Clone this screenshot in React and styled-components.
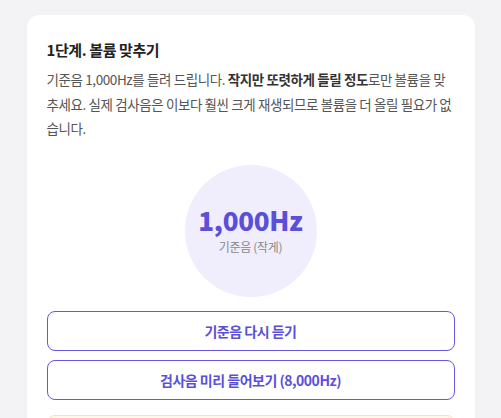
import React from 'react';
import styled, { createGlobalStyle } from 'styled-components';

const GlobalStyle = createGlobalStyle`
  body {
    margin: 0;
    background: #f3f3f6;
    font-family: "Noto Sans CJK KR", "Noto Sans", sans-serif;
  }
`;

const Card = styled.div`
  max-width: 448px;
  margin: 15px auto 0;
  background: #fff;
  border-radius: 12px;
  box-shadow: 0 1px 3px rgba(0, 0, 0, 0.04);
  padding: 24px 20px 20px;
  box-sizing: border-box;
`;

const Title = styled.h2`
  margin: 0 0 6px;
  font-size: 15px;
  line-height: 22px;
  font-weight: 700;
  color: #222;
  letter-spacing: -0.4px;
`;

const Desc = styled.p`
  margin: 0;
  font-size: 13.5px;
  line-height: 24.5px;
  color: #555;
  letter-spacing: -0.4px;

  strong {
    font-weight: 700;
    color: #333;
  }
`;

const Tone = styled.div`
  width: 132px;
  height: 132px;
  border-radius: 50%;
  background: #f0eefd;
  margin: 24px auto 14px;
  display: flex;
  flex-direction: column;
  align-items: center;
  justify-content: center;
`;

const Freq = styled.div`
  font-size: 26px;
  line-height: 30px;
  font-weight: 800;
  color: #5b4fd9;
  letter-spacing: -0.3px;
  margin-bottom: 3px;
`;

const ToneLabel = styled.div`
  font-size: 12px;
  line-height: 18px;
  color: #888;
  letter-spacing: -0.3px;
`;

const Actions = styled.div`
  display: flex;
  flex-direction: column;
  gap: 9px;
`;

const OutlineButton = styled.button`
  height: 40px;
  border: 1px solid #6656e0;
  border-radius: 8px;
  background: #fff;
  color: #5b4fd9;
  font-family: inherit;
  font-size: 14px;
  font-weight: 700;
  letter-spacing: -0.5px;
  cursor: pointer;
`;

const Notice = styled.div`
  margin-top: 15px;
  height: 40px;
  border: 1px solid #f2e3b8;
  border-radius: 8px;
  background: #fdf8e9;
`;

export default function App() {
  return (
    <>
      <GlobalStyle />
      <Card>
        <Title>1단계. 볼륨 맞추기</Title>
        <Desc>
          기준음 1,000Hz를 들려 드립니다. <strong>작지만 또렷하게 들릴 정도</strong>로만 볼륨을 맞추세요.
          실제 검사음은 이보다 훨씬 크게 재생되므로 볼륨을 더 올릴 필요가 없습니다.
        </Desc>
        <Tone>
          <Freq>1,000Hz</Freq>
          <ToneLabel>기준음 (작게)</ToneLabel>
        </Tone>
        <Actions>
          <OutlineButton>기준음 다시 듣기</OutlineButton>
          <OutlineButton>검사음 미리 들어보기 (8,000Hz)</OutlineButton>
        </Actions>
        <Notice />
      </Card>
    </>
  );
}
